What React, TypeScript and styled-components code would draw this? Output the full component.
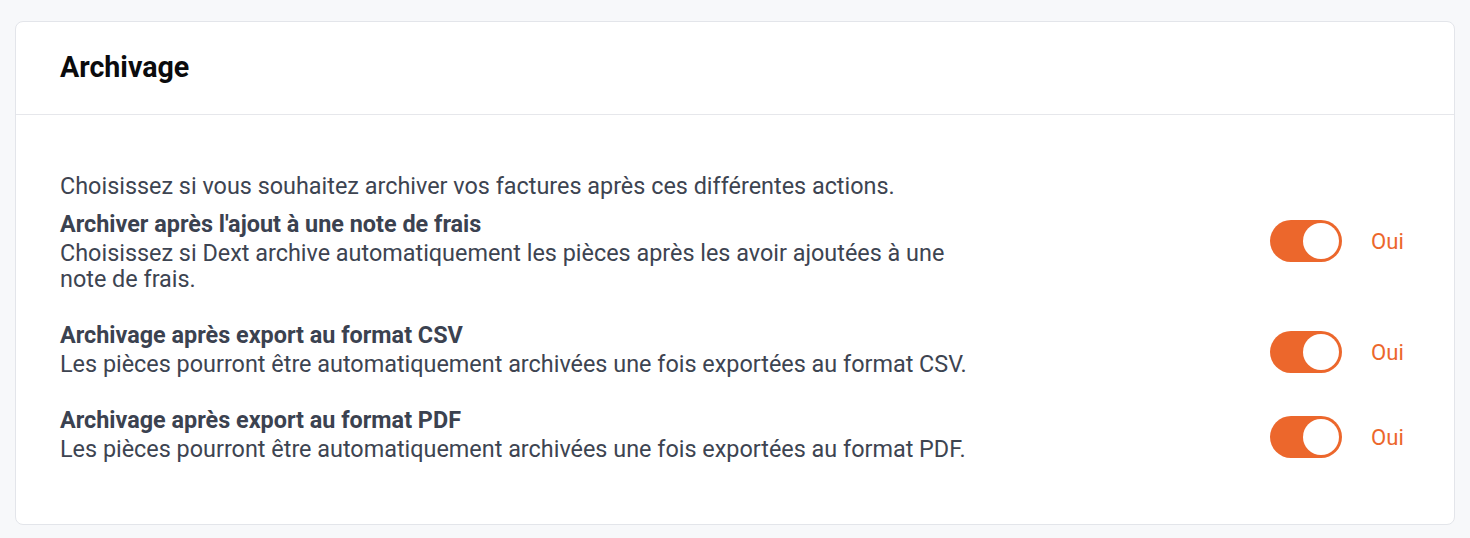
import React from "react";
import styled, { createGlobalStyle } from "styled-components";

const GlobalStyle = createGlobalStyle`
  html, body { margin: 0; padding: 0; background: #f7f8fa; }
  body { font-family: Roboto, "Liberation Sans", Arial, sans-serif; -webkit-font-smoothing: antialiased; }
  * { box-sizing: border-box; }
`;

const Page = styled.div`
  padding: 21px 15px 15px 15px;
  min-height: 538px;
`;

const Card = styled.section`
  background: #ffffff;
  border: 1px solid #e3e5ea;
  border-radius: 8px;
`;

const CardHeader = styled.header`
  padding: 28px 44px 30px 44px;
  border-bottom: 1px solid #e6e7eb;
`;

const Title = styled.h2`
  margin: 0;
  font-size: 28.6px;
  line-height: 34px;
  font-weight: 700;
  color: #0b0b0d;
`;

const CardBody = styled.div`
  padding: 58px 44px 62px 44px;
  display: flex;
  flex-direction: column;
`;

const Intro = styled.p`
  margin: 0 0 11px 0;
  font-size: 23.4px;
  line-height: 26px;
  color: #3d4451;
`;

const Rows = styled.div`
  display: flex;
  flex-direction: column;
  gap: 29px;
`;

const Row = styled.div`
  display: flex;
  align-items: flex-start;
  justify-content: space-between;
`;

const TextBlock = styled.div`
  max-width: 916px;
  display: flex;
  flex-direction: column;
  gap: 2px;
`;

const RowTitle = styled.div`
  font-size: 23.4px;
  line-height: 28px;
  font-weight: 700;
  color: #3b4250;
`;

const RowDesc = styled.div`
  font-size: 23.4px;
  line-height: 26px;
  color: #3d4451;
`;

const Control = styled.div`
  width: 140px;
  margin-top: 10px;
  display: flex;
  align-items: center;
  gap: 29px;
  flex-shrink: 0;
`;

const Track = styled.button<{ $on: boolean }>`
  width: 72px;
  height: 42px;
  border-radius: 21px;
  border: none;
  padding: 3px;
  margin: 0;
  cursor: pointer;
  background: ${(p) => (p.$on ? "#ec672c" : "#d1d5db")};
  display: flex;
  justify-content: ${(p) => (p.$on ? "flex-end" : "flex-start")};
  align-items: center;
`;

const Knob = styled.span`
  width: 36px;
  height: 36px;
  border-radius: 50%;
  background: #ffffff;
  display: block;
`;

const StateLabel = styled.span<{ $on: boolean }>`
  font-size: 22.1px;
  line-height: 26px;
  color: ${(p) => (p.$on ? "#ec672c" : "#6b7280")};
`;

type Setting = { title: string; desc: string; on: boolean };

const settings: Setting[] = [
  {
    title: "Archiver après l'ajout à une note de frais",
    desc: "Choisissez si Dext archive automatiquement les pièces après les avoir ajoutées à une note de frais.",
    on: true,
  },
  {
    title: "Archivage après export au format CSV",
    desc: "Les pièces pourront être automatiquement archivées une fois exportées au format CSV.",
    on: true,
  },
  {
    title: "Archivage après export au format PDF",
    desc: "Les pièces pourront être automatiquement archivées une fois exportées au format PDF.",
    on: true,
  },
];

export default function App() {
  const [values, setValues] = React.useState(settings.map((s) => s.on));
  return (
    <>
      <GlobalStyle />
      <Page>
        <Card>
          <CardHeader>
            <Title>Archivage</Title>
          </CardHeader>
          <CardBody>
            <Intro>Choisissez si vous souhaitez archiver vos factures après ces différentes actions.</Intro>
            <Rows>
              {settings.map((s, i) => (
                <Row key={s.title}>
                  <TextBlock>
                    <RowTitle>{s.title}</RowTitle>
                    <RowDesc>{s.desc}</RowDesc>
                  </TextBlock>
                  <Control>
                    <Track
                      $on={values[i]}
                      aria-pressed={values[i]}
                      onClick={() => setValues((v) => v.map((x, j) => (j === i ? !x : x)))}
                    >
                      <Knob />
                    </Track>
                    <StateLabel $on={values[i]}>{values[i] ? "Oui" : "Non"}</StateLabel>
                  </Control>
                </Row>
              ))}
            </Rows>
          </CardBody>
        </Card>
      </Page>
    </>
  );
}
